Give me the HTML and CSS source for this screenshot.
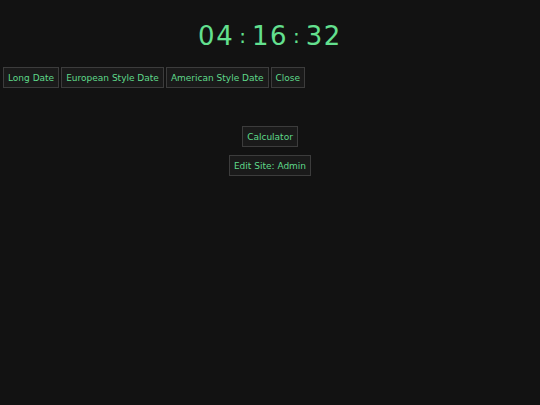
FILE: index.html
```html
<!DOCTYPE html>
<html>
<head>
<meta charset="utf-8">
<link rel="stylesheet" href="styles.css">
</head>
<body>
<div class="clock"><span class="num">04</span><span class="sep">:</span><span class="num">16</span><span class="sep">:</span><span class="num">32</span></div>
<div class="nav">
  <button class="btn">Long Date</button>
  <button class="btn">European Style Date</button>
  <button class="btn">American Style Date</button>
  <button class="btn">Close</button>
</div>
<div class="links">
  <button class="btn">Calculator</button>
  <button class="btn">Edit Site: Admin</button>
</div>
</body>
</html>
```
FILE: styles.css
```css
html, body {
  margin: 0;
  padding: 0;
  background: #121212;
  height: 100%;
}
body {
  font-family: "DejaVu Sans", sans-serif;
  color: #5fd98a;
}
.clock {
  display: flex;
  justify-content: center;
  align-items: baseline;
  font-size: 26px;
  line-height: 30px;
  padding-top: 21px;
  height: 46px;
  color: #63e08f;
}
.num {
  letter-spacing: 1.5px;
}
.sep {
  font-size: 20px;
  margin: 0 6px 0 5px;
  position: relative;
  top: -2px;
}
.nav {
  display: flex;
  gap: 2px;
  padding-left: 3px;
}
.btn {
  font-family: "DejaVu Sans", sans-serif;
  font-size: 9px;
  color: #5fd98a;
  background: #1a1a1a;
  border: 1px solid #3c3c3c;
  height: 21px;
  padding: 0 4px;
  margin: 0;
}
.links {
  display: flex;
  flex-direction: column;
  align-items: center;
  gap: 8px;
  margin-top: 38px;
}
```
